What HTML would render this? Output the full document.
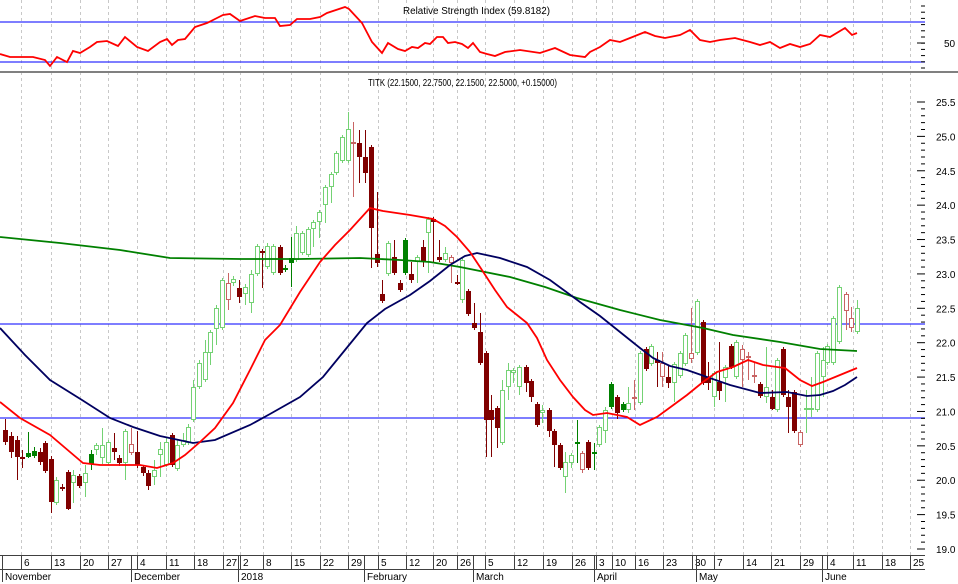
<!DOCTYPE html>
<html><head><meta charset="utf-8"><style>
html,body{margin:0;padding:0;background:#fff;}
svg{display:block;font-family:"Liberation Sans",sans-serif;}
</style></head><body>
<svg id="s" width="958" height="584" xmlns="http://www.w3.org/2000/svg">
<rect width="958" height="584" fill="#fff"/>
<g id="grid"></g>
<line x1="0" y1="22" x2="925" y2="22" stroke="#3030ff" stroke-width="1.3"/>
<line x1="0" y1="62" x2="925" y2="62" stroke="#3030ff" stroke-width="1.3"/>
<line x1="0" y1="72" x2="958" y2="72" stroke="#808080" stroke-width="2"/>
<line x1="0" y1="324" x2="925" y2="324" stroke="#3030ff" stroke-width="1.3"/>
<line x1="0" y1="418" x2="925" y2="418" stroke="#3030ff" stroke-width="1.3"/>
<text x="403" y="14" font-size="10" textLength="147" lengthAdjust="spacingAndGlyphs" fill="#000">Relative Strength Index (59.8182)</text>
<text x="368" y="86" font-size="10" textLength="189" lengthAdjust="spacingAndGlyphs" fill="#000">TITK (22.1500, 22.7500, 22.1500, 22.5000, +0.15000)</text>
<polyline fill="none" stroke="#ff0000" stroke-width="1.8" points="0,54 10,57 33,57 45,60 50,66 57,57 67,62 73,51 80,53 90,47 97,42 107,41 118,46 125,37 137,47 148,51 160,42 167,39 172,45 178,40 185,39 195,27 207,23 217,18 223,15 230,14 240,21 255,16 265,18 275,18 280,26 290,25 297,19 310,19 320,17 327,13 345,7 349,9 362,23 372,42 382,53 388,43 398,49 405,51 412,47 418,48 425,43 430,44 437,37 443,37 448,43 455,42 462,44 468,48 473,43 480,52 487,54 495,56 505,52 520,50 540,53 555,48 570,55 585,57 590,52 600,47 610,40 620,42 630,38 645,32 655,36 665,38 680,35 690,30 700,40 710,42 720,40 735,38 750,42 760,45 770,42 780,48 790,44 800,47 810,44 820,35 830,37 845,28 852,35 857,33"/>
<g id="candles"></g>
<polyline fill="none" stroke="#008000" stroke-width="1.8" points="0,237 60,243 120,250 170,258 240,259 300,259 360,258 400,260 430,262 460,267 510,277 545,287 577,298 620,310 660,320 703,328 733,335 780,342 820,349 857,351"/>
<polyline fill="none" stroke="#000060" stroke-width="1.8" points="0,328 25,355 50,380 82,400 110,418 133,427 160,436 193,443 215,440 250,425 270,414 300,397 323,377 345,350 367,323 385,309 410,295 430,281 450,265 465,256 477,253 500,258 527,267 550,280 580,302 600,316 620,332 640,348 653,358 670,366 687,370 707,377 730,385 760,393 787,392 807,396 820,395 833,391 845,385 857,377"/>
<polyline fill="none" stroke="#ff0000" stroke-width="1.8" points="0,402 20,418 50,435 70,452 83,463 100,465 140,465 157,468 173,463 185,455 200,442 215,428 233,403 250,370 265,340 280,325 300,292 320,262 335,245 350,230 370,208 383,211 410,215 433,219 445,226 457,237 470,252 480,267 495,290 507,307 527,323 537,338 547,360 560,380 573,397 585,410 593,415 607,413 627,417 640,425 657,417 672,406 687,395 703,382 717,372 733,367 748,360 763,365 777,367 785,368 800,380 812,386 823,382 840,375 857,368"/>
<g id="axis"></g>
</svg>
<script>
var NS="http://www.w3.org/2000/svg";
function el(p,t,a,txt){var e=document.createElementNS(NS,t);for(var k in a)e.setAttribute(k,a[k]);if(txt!==undefined)e.textContent=txt;p.appendChild(e);return e;}
var grid=document.getElementById('grid'),axis=document.getElementById('axis'),cg=document.getElementById('candles');
var weeks=[[21,'6'],[51,'13'],[80,'20'],[108,'27'],[137,'4'],[166,'11'],[194,'18'],[223,'27'],[240,'2'],[263,'8'],[291,'15'],[320,'22'],[348,'29'],[378,'5'],[406,'12'],[433,'20'],[457,'26'],[485,'5'],[514,'12'],[543,'19'],[572,'26'],[596,'3'],[612,'10'],[635,'16'],[663,'23'],[692,'30'],[714,'7'],[743,'14'],[771,'21'],[800,'29'],[827,'4'],[853,'11'],[882,'18'],[910,'25']];
weeks.forEach(function(w){
 el(grid,'line',{x1:w[0]+.5,y1:0,x2:w[0]+.5,y2:555,stroke:'#c8c8c8','stroke-dasharray':'3,3'});
 el(axis,'line',{x1:w[0]+.5,y1:555,x2:w[0]+.5,y2:569,stroke:'#404040'});
 el(axis,'text',{x:w[0]+3,y:566,'font-size':10,fill:'#000'},w[1]);
});
el(axis,'line',{x1:2.5,y1:555,x2:2.5,y2:569,stroke:'#404040'});
el(axis,'line',{x1:0,y1:555.5,x2:925,y2:555.5,stroke:'#404040'});
el(axis,'line',{x1:0,y1:569.5,x2:925,y2:569.5,stroke:'#404040'});
[[2,'November'],[131,'December'],[238,'2018'],[364,'February'],[473,'March'],[594,'April'],[696,'May'],[822,'June']].forEach(function(m){
 el(axis,'line',{x1:m[0]+.5,y1:555,x2:m[0]+.5,y2:582,stroke:'#404040'});
 el(axis,'text',{x:m[0]+3,y:580,'font-size':10,fill:'#000'},m[1]);
});
for(var i=0;i<=65;i++){var p=19+i*0.1;var y=549-(p-19)*68.77;var maj=(i%5==0);
 el(axis,'line',{x1:maj?917:921,y1:y,x2:925,y2:y,stroke:'#000'});
 if(maj)el(axis,'text',{x:936,y:y+4,'font-size':10,fill:'#000'},p.toFixed(1));}
for(var j=0;j<12;j++){var yy=6+j*6.2;if(yy>70)break;el(axis,'line',{x1:921,y1:yy,x2:925,y2:yy,stroke:'#000'});}
el(axis,'line',{x1:917,y1:43,x2:925,y2:43,stroke:'#000'});
el(axis,'text',{x:944,y:47,'font-size':10,fill:'#000'},'50');
var C=[[5,430,442,419,445,'r'],[11,436,452,432,458,'r'],[17,440,457,436,480,'r'],[22,457,459,450,468,'r'],[28,453,457,432,458,'G'],[34,451,456,447,458,'G'],[40,452,462,448,465,'r'],[45,443,471,441,473,'r'],[51,459,502,456,513,'r'],[56,480,503,477,505,'g'],[62,487,489,484,491,'r'],[68,472,509,470,510,'r'],[73,475,483,470,503,'g'],[79,476,486,474,488,'r'],[85,473,483,465,497,'g'],[91,454,464,450,470,'G'],[96,445,450,443,455,'g'],[102,445,458,428,464,'g'],[108,442,463,440,465,'g'],[114,448,452,433,460,'r'],[119,458,463,455,466,'r'],[125,431,463,429,480,'g'],[131,444,453,428,455,'p'],[137,452,465,431,468,'r'],[143,467,473,465,476,'r'],[148,473,486,470,490,'r'],[154,470,477,460,485,'g'],[160,449,455,442,477,'g'],[166,442,465,438,467,'g'],[172,435,465,433,467,'r'],[177,445,469,440,471,'g'],[183,440,445,433,447,'g'],[188,427,443,424,445,'g'],[193,387,420,380,422,'g'],[199,363,387,360,389,'g'],[205,352,380,340,382,'g'],[210,332,353,330,365,'g'],[216,308,329,305,345,'g'],[222,280,328,278,330,'g'],[228,283,300,273,310,'p'],[233,279,283,276,286,'g'],[239,288,297,280,303,'r'],[245,287,294,284,305,'g'],[251,274,303,270,313,'g'],[257,246,274,244,276,'g'],[262,251,253,249,288,'r'],[267,246,267,243,269,'g'],[273,246,273,244,275,'g'],[280,247,273,245,275,'r'],[285,268,270,265,272,'G'],[291,258,263,237,287,'G'],[296,233,260,226,262,'g'],[302,233,253,231,255,'g'],[308,229,255,227,257,'g'],[313,222,229,220,247,'g'],[319,212,222,210,238,'g'],[325,187,205,185,223,'g'],[331,174,187,172,203,'g'],[336,153,173,151,175,'g'],[342,137,161,135,163,'g'],[348,129,161,112,163,'g'],[353,142,144,122,197,'p'],[359,143,157,130,183,'r'],[365,157,173,130,183,'r'],[371,147,228,145,268,'r'],[377,254,263,192,267,'r'],[382,294,301,280,303,'r'],[388,243,274,241,276,'g'],[394,257,273,240,275,'r'],[400,283,290,280,292,'r'],[405,240,273,238,275,'G'],[411,274,280,262,283,'r'],[417,257,262,255,283,'g'],[423,247,262,240,267,'r'],[428,219,233,217,273,'g'],[433,219,222,217,263,'r'],[439,257,260,240,262,'r'],[445,253,260,247,262,'g'],[451,257,263,255,283,'p'],[457,282,284,275,285,'r'],[462,260,300,258,303,'g'],[468,291,314,289,316,'r'],[474,323,328,303,330,'r'],[480,332,363,313,365,'r'],[486,353,420,351,457,'r'],[491,410,420,395,457,'r'],[497,408,428,406,448,'r'],[502,390,443,380,445,'g'],[508,370,387,363,400,'g'],[513,370,373,368,383,'g'],[519,367,387,365,395,'g'],[526,367,383,365,392,'r'],[531,381,397,379,402,'r'],[537,404,425,402,427,'r'],[542,410,413,405,423,'g'],[549,410,431,408,437,'r'],[554,431,445,429,467,'r'],[560,445,468,443,470,'r'],[565,462,477,452,493,'g'],[571,455,463,453,468,'g'],[577,442,444,420,463,'G'],[582,453,470,451,473,'p'],[588,442,468,440,470,'r'],[594,452,454,443,470,'G'],[599,427,445,425,447,'g'],[605,410,431,407,443,'g'],[611,384,407,382,409,'G'],[617,397,413,395,419,'r'],[623,404,410,402,412,'G'],[628,403,410,387,413,'g'],[634,397,399,380,410,'p'],[640,353,403,351,405,'g'],[646,349,369,347,371,'r'],[651,346,364,344,366,'g'],[657,360,363,352,387,'r'],[662,363,377,352,387,'p'],[668,377,383,365,388,'r'],[674,364,383,362,402,'g'],[680,353,376,351,378,'g'],[685,335,364,333,366,'g'],[691,353,359,308,363,'p'],[697,301,353,299,355,'g'],[703,322,383,320,385,'r'],[708,377,383,362,390,'r'],[714,373,397,371,407,'g'],[719,382,391,342,400,'r'],[725,367,378,365,402,'g'],[731,346,367,344,369,'r'],[736,342,377,340,379,'g'],[742,349,360,345,387,'p'],[748,356,358,352,380,'p'],[754,375,377,363,383,'p'],[760,384,396,382,398,'r'],[766,387,397,347,403,'g'],[772,397,409,390,410,'r'],[777,360,410,358,412,'g'],[783,349,395,347,397,'r'],[788,397,407,390,433,'r'],[794,392,431,390,433,'r'],[800,432,445,430,447,'p'],[806,408,410,390,433,'g'],[811,408,410,377,417,'g'],[817,353,410,351,412,'g'],[823,360,377,347,397,'g'],[827,346,363,344,365,'g'],[833,318,363,316,365,'g'],[839,287,342,285,344,'g'],[846,294,311,292,330,'p'],[851,318,328,307,332,'p'],[857,308,332,300,334,'g']];
var col={g:'#74d274',p:'#c86464',r:'#800000',G:'#008000'};
C.forEach(function(c){var x=c[0],t=c[5],k=col[t];
 el(cg,'line',{x1:x+.5,y1:c[3],x2:x+.5,y2:c[4],stroke:k,'stroke-width':1});
 var h=Math.max(c[2]-c[1],2);
 if(t=='g'||t=='p')el(cg,'rect',{x:x-1.5,y:c[1]+.5,width:4,height:h-1,fill:'#fff',stroke:k,'stroke-width':1});
 else el(cg,'rect',{x:x-2,y:c[1],width:5,height:h,fill:k});
});
</script>
</body></html>
